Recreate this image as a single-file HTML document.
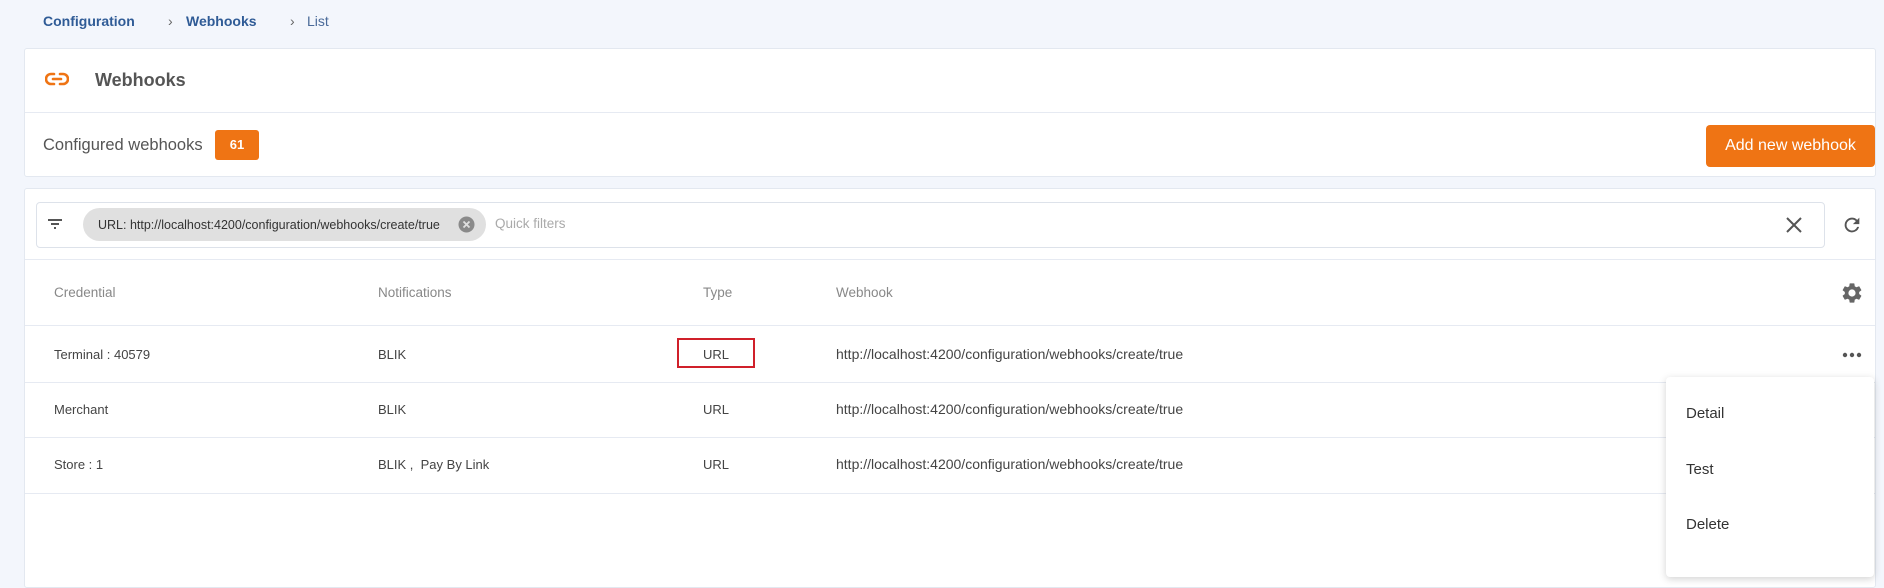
<!DOCTYPE html>
<html><head><meta charset="utf-8"><style>
*{box-sizing:border-box;margin:0;padding:0}
body{width:1884px;height:564px;background:#f3f6fc;font-family:"Liberation Sans",Arial,sans-serif;position:relative;overflow:hidden;color:#444}
.a{position:absolute}
.bc{top:13px;font-size:14px;font-weight:bold;color:#2f5b96}
.card{background:#fff;border:1px solid #e3e8f0;border-radius:3px}
.hd{font-size:14px;color:#888}
.cell{font-size:13px;color:#444}
.url{font-size:14px;color:#444}
.line{height:1px;background:#e6eaf2;left:25px;width:1850px}
</style></head><body>
<div class="a bc" style="left:43px">Configuration</div>
<div class="a bc" style="left:168px;font-weight:normal;color:#666">›</div>
<div class="a bc" style="left:186px">Webhooks</div>
<div class="a bc" style="left:290px;font-weight:normal;color:#666">›</div>
<div class="a bc" style="left:307px;font-weight:normal;color:#4a6a99">List</div>

<div class="a card" style="left:24px;top:48px;width:1852px;height:129px"></div>
<svg class="a" style="left:45px;top:71px" width="24" height="16" viewBox="0 0 24 16"><path d="M9 3H6a5 5 0 0 0 0 10h3M15 3h3a5 5 0 0 1 0 10h-3M8 8h8" fill="none" stroke="#ef7414" stroke-width="2.6" stroke-linecap="round"/></svg>
<div class="a" style="left:95px;top:70px;font-size:18px;font-weight:bold;color:#555">Webhooks</div>
<div class="a line" style="top:112px"></div>
<div class="a" style="left:43px;top:136px;font-size:16.5px;color:#555">Configured webhooks</div>
<div class="a" style="left:215px;top:130px;width:44px;height:30px;background:#ef7414;border-radius:3px;color:#fff;font-size:13px;font-weight:bold;text-align:center;line-height:30px">61</div>
<div class="a" style="left:1706px;top:125px;width:169px;height:42px;background:#ef7414;border-radius:4px;color:#fff;font-size:16px;text-align:center;line-height:42px">Add new webhook</div>

<div class="a card" style="left:24px;top:188px;width:1852px;height:400px"></div>
<div class="a" style="left:36px;top:202px;width:1789px;height:46px;border:1px solid #dde2ea;border-radius:4px;background:#fff"></div>
<svg class="a" style="left:47px;top:217px" width="16" height="14" viewBox="0 0 16 14"><path d="M1 3h14M4 7h8M7 11h2" stroke="#555" stroke-width="2"/></svg>
<div class="a" style="left:83px;top:208px;width:403px;height:33px;background:#e0e0e0;border-radius:17px"></div>
<div class="a" style="left:98px;top:218px;font-size:12.5px;color:#333">URL: http://localhost:4200/configuration/webhooks/create/true</div>
<svg class="a" style="left:458px;top:216px" width="17" height="17" viewBox="0 0 17 17"><circle cx="8.5" cy="8.5" r="8" fill="#8a8a8a"/><path d="M5.5 5.5l6 6M11.5 5.5l-6 6" stroke="#e0e0e0" stroke-width="1.8"/></svg>
<div class="a" style="left:495px;top:216px;font-size:13.5px;color:#aaa">Quick filters</div>
<svg class="a" style="left:1785px;top:216px" width="18" height="18" viewBox="0 0 18 18"><path d="M2 2l14 14M16 2L2 16" stroke="#555" stroke-width="2"/></svg>
<svg class="a" style="left:1841px;top:214px" width="22" height="22" viewBox="0 0 24 24"><path d="M17.65 6.35A7.96 7.96 0 0 0 12 4a8 8 0 1 0 7.73 10h-2.08A6 6 0 1 1 12 6c1.66 0 3.14.69 4.22 1.780L13 11h7V4l-2.35 2.35z" fill="#555"/></svg>
<div class="a line" style="top:259px"></div>

<div class="a hd" style="left:54px;top:285px;font-size:13.5px">Credential</div>
<div class="a hd" style="left:378px;top:285px;font-size:13.5px">Notifications</div>
<div class="a hd" style="left:703px;top:285px;font-size:13.5px">Type</div>
<div class="a hd" style="left:836px;top:285px;font-size:13.5px">Webhook</div>
<svg class="a" style="left:1840px;top:281px" width="24" height="24" viewBox="0 0 24 24"><path d="M19.14 12.94c.04-.3.06-.61.06-.94 0-.32-.02-.64-.07-.94l2.03-1.58a.49.49 0 0 0 .12-.61l-1.92-3.32a.49.49 0 0 0-.59-.22l-2.39.96c-.5-.38-1.03-.7-1.62-.94l-.36-2.54a.48.48 0 0 0-.48-.41h-3.84c-.24 0-.43.17-.47.41l-.36 2.54c-.59.24-1.13.57-1.62.94l-2.39-.96a.48.48 0 0 0-.59.22L2.74 8.87c-.12.21-.08.47.12.61l2.03 1.58c-.05.3-.09.63-.09.94s.02.64.07.94l-2.03 1.58a.49.49 0 0 0-.12.61l1.92 3.32c.12.22.37.29.59.22l2.39-.96c.5.38 1.03.7 1.62.94l.36 2.54c.05.24.24.41.48.41h3.84c.24 0 .44-.17.47-.41l.36-2.54c.59-.24 1.13-.56 1.62-.94l2.39.96c.22.08.47 0 .59-.22l1.92-3.32c.12-.22.07-.47-.12-.61l-2.01-1.58zM12 15.6A3.6 3.6 0 1 1 12 8.4a3.6 3.6 0 0 1 0 7.2z" fill="#666"/></svg>
<div class="a line" style="top:325px"></div>

<div class="a cell" style="left:54px;top:347px">Terminal : 40579</div>
<div class="a cell" style="left:378px;top:347px">BLIK</div>
<div class="a" style="left:677px;top:338px;width:78px;height:30px;border:2px solid #d0202a"></div>
<div class="a cell" style="left:703px;top:347px">URL</div>
<div class="a url" style="left:836px;top:346px">http://localhost:4200/configuration/webhooks/create/true</div>
<svg class="a" style="left:1842px;top:351px" width="20" height="8" viewBox="0 0 20 8"><circle cx="3" cy="4" r="2.2" fill="#555"/><circle cx="10" cy="4" r="2.2" fill="#555"/><circle cx="17" cy="4" r="2.2" fill="#555"/></svg>
<div class="a line" style="top:382px"></div>

<div class="a cell" style="left:54px;top:402px">Merchant</div>
<div class="a cell" style="left:378px;top:402px">BLIK</div>
<div class="a cell" style="left:703px;top:402px">URL</div>
<div class="a url" style="left:836px;top:401px">http://localhost:4200/configuration/webhooks/create/true</div>
<div class="a line" style="top:437px"></div>

<div class="a cell" style="left:54px;top:457px">Store : 1</div>
<div class="a cell" style="left:378px;top:457px">BLIK ,&nbsp; Pay By Link</div>
<div class="a cell" style="left:703px;top:457px">URL</div>
<div class="a url" style="left:836px;top:456px">http://localhost:4200/configuration/webhooks/create/true</div>
<div class="a line" style="top:493px"></div>

<div class="a" style="left:1666px;top:377px;width:208px;height:200px;background:#fff;border-radius:4px;box-shadow:0 2px 8px rgba(0,0,0,.18)"></div>
<div class="a" style="left:1686px;top:405px;font-size:15px;color:#333">Detail</div>
<div class="a" style="left:1686px;top:461px;font-size:15px;color:#333">Test</div>
<div class="a" style="left:1686px;top:516px;font-size:15px;color:#333">Delete</div>
</body></html>
